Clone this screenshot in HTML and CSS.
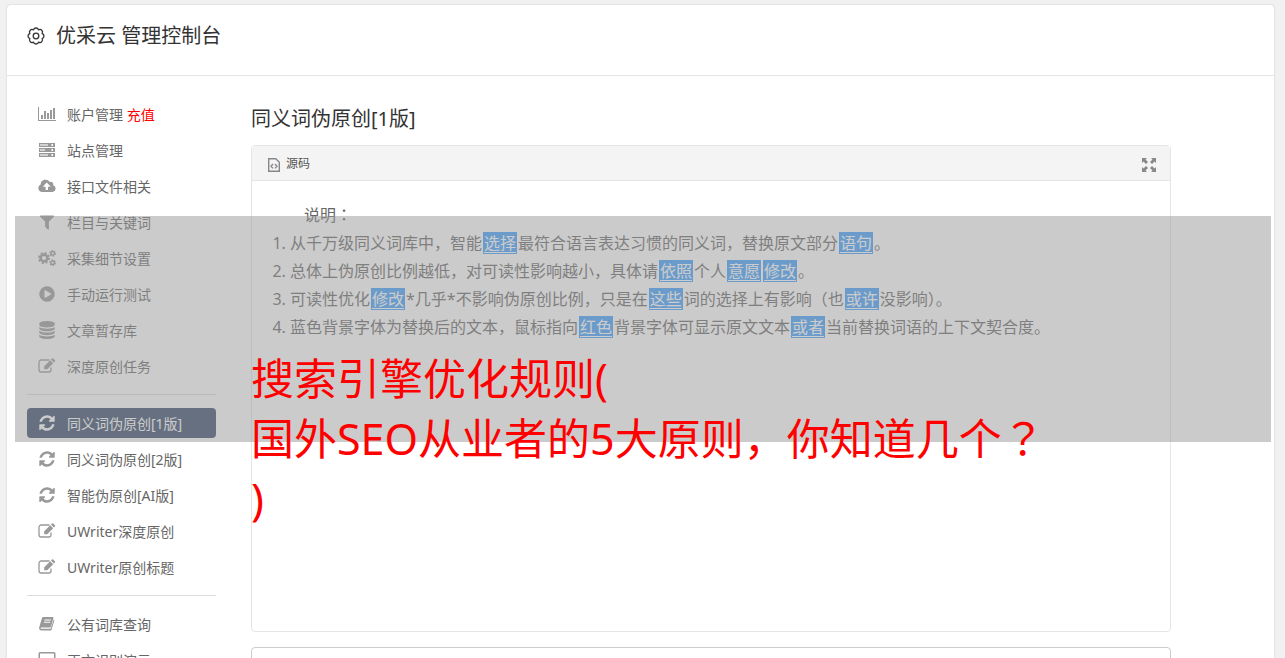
FILE: index.html
```html
<!DOCTYPE html>
<html lang="zh-CN">
<head>
    <meta charset="UTF-8">
    <title>优采云 管理控制台</title>
    <link rel="stylesheet" href="styles.css">
</head>
<body>
    <!-- 图标 -->
    <svg class="sprite" aria-hidden="true">
        <symbol id="i-gear" viewBox="0 0 20 20">
            <path fill="none" stroke="currentColor" stroke-width="1.3" stroke-linejoin="round" d="M16.1 12.5A2.6 2.6 0 0 1 12.5 16.1A2.6 2.6 0 0 1 7.5 16.1A2.6 2.6 0 0 1 3.9 12.5A2.6 2.6 0 0 1 3.9 7.5A2.6 2.6 0 0 1 7.5 3.9A2.6 2.6 0 0 1 12.5 3.9A2.6 2.6 0 0 1 16.1 7.5A2.6 2.6 0 0 1 16.1 12.5z"/>
            <circle cx="10" cy="10" r="2.8" fill="none" stroke="currentColor" stroke-width="1.3"/>
        </symbol>
        <symbol id="i-chart" viewBox="0 0 18 18">
            <path d="M0 2h1v13h17v1H0zM3 10h2v4H3zM6 6h2v8H6zM9 8h2v6H9zM12 5h2v9h-2zM15 3h2v11h-2z"/>
        </symbol>
        <symbol id="i-server" viewBox="0 0 18 18">
            <path fill-rule="evenodd" d="M1 2h16v4H1zM2 3v2h8V3zM13 3v2h2V3zM1 7h16v4H1zM2 8v2h5V8zM13 8v2h2V8zM1 12h16v4H1zM2 13v2h8v-2zM13 13v2h2v-2z"/>
            <path opacity=".45" d="M2 3h12v2H2zM2 8h12v2H2zM2 13h12v2H2z"/>
        </symbol>
        <symbol id="i-cloud" viewBox="0 0 18 18">
            <path fill-rule="evenodd" d="M4.5 15A4 4 0 0 1 2.6 7.4A5 5 0 0 1 11.8 5A2.6 2.6 0 0 1 15.2 8.2A3.5 3.5 0 0 1 14.5 15zM8.7 5.6L5.2 9.2V9.8H7.6V13H10V9.8H12.4V9.2z"/>
        </symbol>
        <symbol id="i-filter" viewBox="0 0 1792 1792">
            <path d="M1595 295q17 41-14 70l-493 493v742q0 42-39 59-13 5-25 5-27 0-45-19l-256-256q-19-19-19-45v-486l-493-493q-31-29-14-70 17-39 59-39h1280q42 0 59 39z"/>
        </symbol>
        <symbol id="i-cogs" viewBox="0 0 18 18">
            <g fill="none" stroke="currentColor">
                <circle cx="6" cy="9" r="3.4" stroke-width="2.6"/>
                <circle cx="6" cy="9" r="5.1" stroke-width="1.8" stroke-dasharray="2 2"/>
                <circle cx="14.6" cy="4.3" r="1.8" stroke-width="1.5"/>
                <circle cx="14.6" cy="4.3" r="2.8" stroke-width="1.1" stroke-dasharray="1.5 1.43"/>
                <circle cx="14.6" cy="13.7" r="1.8" stroke-width="1.5"/>
                <circle cx="14.6" cy="13.7" r="2.8" stroke-width="1.1" stroke-dasharray="1.5 1.43"/>
            </g>
        </symbol>
        <symbol id="i-play" viewBox="0 0 1792 1792">
            <path d="M896 128q209 0 385.5 103t279.5 279.5 103 385.5-103 385.5-279.5 279.5-385.5 103-385.5-103-279.5-279.5-103-385.5 103-385.5 279.5-279.5 385.5-103zm384 823q32-18 32-55t-32-55l-544-320q-31-19-64-1-32 19-32 56v640q0 37 32 56 16 8 32 8 17 0 32-9z"/>
        </symbol>
        <symbol id="i-database" viewBox="0 0 1792 1792">
            <path d="M896 768q237 0 443-43t325-127v170q0 69-103 128t-280 93.5-385 34.5-385-34.5-280-93.5-103-128v-170q119 84 325 127t443 43zm0 768q237 0 443-43t325-127v170q0 69-103 128t-280 93.5-385 34.5-385-34.5-280-93.5-103-128v-170q119 84 325 127t443 43zm0-384q237 0 443-43t325-127v170q0 69-103 128t-280 93.5-385 34.5-385-34.5-280-93.5-103-128v-170q119 84 325 127t443 43zm0-1152q208 0 385 34.5t280 93.5 103 128v128q0 69-103 128t-280 93.5-385 34.5-385-34.5-280-93.5-103-128v-128q0-69 103-128t280-93.5 385-34.5z"/>
        </symbol>
        <symbol id="i-edit" viewBox="0 0 18 18">
            <path fill="none" stroke="currentColor" stroke-width="1.3" d="M11.5 3H3.2A2.2 2.2 0 0 0 1 5.2V12.8A2.2 2.2 0 0 0 3.2 15H10.8A2.2 2.2 0 0 0 13 12.8V10.5"/>
            <path d="M6.2 12.2V9.2L12.2 3.2L15.2 6.2L9.2 12.2zM13 2.5L14 1.5Q14.6 1 15.2 1.5L16.9 3.2Q17.4 3.8 16.9 4.4L15.9 5.4z"/>
        </symbol>
        <symbol id="i-refresh" viewBox="0 0 1792 1792">
            <path d="M1639 1056q0 5-1 7-64 268-268 434.5t-478 166.5q-146 0-282.5-55t-243.5-157l-129 129q-19 19-45 19t-45-19-19-45v-448q0-26 19-45t45-19h448q26 0 45 19t19 45-19 45l-137 137q71 66 161 102t187 36q134 0 250-65t186-179q11-17 53-117 8-23 30-23h192q13 0 22.5 9.5t9.5 22.5zm25-800v448q0 26-19 45t-45 19h-448q-26 0-45-19t-19-45 19-45l138-138q-148-137-349-137-134 0-250 65t-186 179q-11 17-53 117-8 23-30 23h-199q-13 0-22.5-9.5t-9.5-22.5v-7q65-268 270-434.5t480-166.5q146 0 284 55.5t245 156.5l130-129q19-19 45-19t45 19 19 45z"/>
        </symbol>
        <symbol id="i-book" viewBox="0 0 18 18">
            <path fill-rule="evenodd" d="M5.2 2H14.4Q15.8 2 15.4 3.4L13 11.4Q12.7 12.4 11.6 12.4H3.4Q2.4 12.4 2.6 13.2Q2.8 13.8 3.6 13.8H12.6L15.8 4.4Q16.6 4.8 16.3 5.8L13.6 14.4Q13.2 15.6 12 15.6H3.4Q1.4 15.6 1.1 13.6Q1 12.8 1.3 12L3.8 3.4Q4.2 2 5.2 2zM6.6 4.6L6.3 5.6H12.7L13 4.6zM6 6.8L5.7 7.8H12L12.3 6.8z"/>
        </symbol>
        <symbol id="i-laptop" viewBox="0 0 18 18">
            <path fill-rule="evenodd" d="M2 1H16Q17.5 1 17.5 2.5V12H.5V2.5Q.5 1 2 1zM2 2.4V10.6H16V2.4zM0 13H18V15H0z"/>
        </symbol>
        <symbol id="i-source" viewBox="0 0 12 14">
            <path fill="none" stroke="currentColor" stroke-width="1.4" d="M.7.7H7.8L11.3 4.2V13.3H.7zM5 6L3 8.2L5 10.4M7 6L9 8.2L7 10.4"/>
        </symbol>
        <symbol id="i-full" viewBox="0 0 14 14">
            <path d="M0 0H5L3.5 1.5L6 4L4 6L1.5 3.5L0 5zM14 0V5L12.5 3.5L10 6L8 4L10.5 1.5L9 0zM0 14V9L1.5 10.5L4 8L6 10L3.5 12.5L5 14zM14 14H9L10.5 12.5L8 10L10 8L12.5 10.5L14 9z"/>
        </symbol>
    </svg>

    <div class="container">
        <header class="header">
            <svg class="logo"><use href="#i-gear"/></svg>
            <h1>优采云 管理控制台</h1>
        </header>

        <div class="content">
            <nav class="sidebar">
                <div class="item"><svg><use href="#i-chart"/></svg><a href="#">账户管理</a>&nbsp;<a href="#" class="pay">充值</a></div>
                <a class="item" href="#"><svg><use href="#i-server"/></svg>站点管理</a>
                <a class="item" href="#"><svg><use href="#i-cloud"/></svg>接口文件相关</a>
                <a class="item" href="#"><svg><use href="#i-filter"/></svg>栏目与关键词</a>
                <a class="item" href="#"><svg><use href="#i-cogs"/></svg>采集细节设置</a>
                <a class="item" href="#"><svg><use href="#i-play"/></svg>手动运行测试</a>
                <a class="item" href="#"><svg><use href="#i-database"/></svg>文章暂存库</a>
                <a class="item" href="#"><svg><use href="#i-edit"/></svg>深度原创任务</a>
                <hr>
                <a class="item active" href="#"><svg><use href="#i-refresh"/></svg>同义词伪原创[1版]</a>
                <a class="item" href="#"><svg><use href="#i-refresh"/></svg>同义词伪原创[2版]</a>
                <a class="item" href="#"><svg><use href="#i-refresh"/></svg>智能伪原创[AI版]</a>
                <a class="item" href="#"><svg><use href="#i-edit"/></svg>UWriter深度原创</a>
                <a class="item" href="#"><svg><use href="#i-edit"/></svg>UWriter原创标题</a>
                <hr>
                <a class="item" href="#"><svg><use href="#i-book"/></svg>公有词库查询</a>
                <a class="item" href="#"><svg><use href="#i-laptop"/></svg>正文识别演示</a>
            </nav>

            <main class="main">
                <h2>同义词伪原创[1版]</h2>
                <section class="editor">
                    <div class="toolbar">
                        <button type="button"><svg class="source"><use href="#i-source"/></svg>源码</button>
                        <button type="button" aria-label="全屏"><svg class="full"><use href="#i-full"/></svg></button>
                    </div>
                    <div class="text">
                        <p>说明<span class="mark" lang="zh-TW">：</span></p>
                        <ol>
                            <li>从千万级同义词库中，智能<u>选择</u>最符合语言表达习惯的同义词，替换原文部分<u>语句</u>。</li>
                            <li>总体上伪原创比例越低，对可读性影响越小，具体请<u>依照</u>个人<u>意愿</u><u>修改</u>。</li>
                            <li>可读性优化<u>修改</u>*几乎*不影响伪原创比例，只是在<u>这些</u>词的选择上有影响（也<u>或许</u>没影响）。</li>
                            <li>蓝色背景字体为替换后的文本，鼠标指向<u>红色</u>背景字体可显示原文文本<u>或者</u>当前替换词语的上下文契合度。</li>
                        </ol>
                    </div>
                </section>
                <textarea class="result" aria-label="结果"></textarea>
            </main>
        </div>
    </div>

    <!-- 标题遮罩 -->
    <div class="mask"></div>
    <div class="headline">搜索引擎优化规则(<br>国外SEO从业者的5大原则，你知道几个<span class="mark" lang="zh-TW">？</span><br>)</div>
</body>
</html>
```
FILE: styles.css
```css
* {
    box-sizing: border-box;
}

body {
    position: relative;
    margin: 0;
    padding: 4px 10px 0 6px;
    background: #f1f1f1;
    color: #666;
    font-family: "Noto Sans", "Noto Sans CJK SC", sans-serif;
    font-size: 14px;
}

a {
    color: inherit;
    text-decoration: none;
}

h1, h2 {
    margin: 0;
    color: #333;
    font-size: 20px;
    font-weight: 400;
    line-height: 30px;
}

.sprite {
    display: none;
}

svg {
    fill: currentColor;
}

.container {
    background: #fff;
    border: 1px solid #e5e5e5;
    border-radius: 5px;
    box-shadow: 0 0 1px #ddd;
}

.header {
    display: flex;
    align-items: center;
    gap: 10px;
    height: 71px;
    padding: 0 19px 8px;
    border-bottom: 1px solid #e5e5e5;
}

.logo {
    width: 20px;
    height: 20px;
    color: #333;
}

.content {
    display: flex;
    gap: 35px;
    padding: 23px 20px;
}

/* 左侧菜单 */
.sidebar {
    display: flex;
    flex: none;
    flex-direction: column;
    gap: 6px;
    width: 189px;
}

.item {
    display: flex;
    align-items: center;
    height: 30px;
    padding-bottom: 1px;
    padding-left: 11px;
    border-radius: 4px;
}

.item svg {
    width: 18px;
    height: 18px;
    margin-right: 11px;
    color: #999;
}

.item.active {
    background: #354969;
    color: #fff;
}

.item.active svg {
    color: #fff;
}

.pay {
    color: #f00;
}

.sidebar hr {
    width: 100%;
    height: 1px;
    margin: 7px 0;
    border: 0;
    background: #ddd;
}

/* 编辑器 */
.main {
    flex: 1;
    max-width: 920px;
    padding-top: 5px;
}

.editor {
    margin-top: 11px;
    border: 1px solid #e5e5e5;
    border-radius: 4px;
}

.toolbar {
    display: flex;
    align-items: center;
    justify-content: space-between;
    height: 35px;
    padding: 0 14px 0 16px;
    background: #f4f4f4;
    border-bottom: 1px solid #e5e5e5;
}

.toolbar button {
    display: flex;
    align-items: center;
    gap: 6px;
    padding: 0;
    border: 0;
    background: none;
    color: #555;
    font-family: inherit;
    font-size: 12px;
    cursor: pointer;
}

.toolbar svg {
    margin-top: 3px;
    color: #888;
}

.source {
    width: 12px;
    height: 14px;
}

.full {
    width: 14px;
    height: 14px;
}

.text {
    min-height: 450px;
    padding: 20px;
    font-size: 16px;
    line-height: 28px;
}

.text p {
    margin: 0;
    text-indent: 2em;
}

.text ol {
    margin: 0;
    padding-left: 18px;
}

.text u {
    margin: 0 1px;
    padding: 0 1px;
    background: #3f9fff;
    color: #fff;
    text-underline-offset: 3px;
}

/* 居中的标点 */
.mark {
    font-family: "Noto Sans CJK TC", sans-serif;
    line-height: 1;
}

.result {
    display: block;
    width: 100%;
    height: 120px;
    margin-top: 15px;
    border: 1px solid #ccc;
    border-radius: 4px;
}

/* 遮罩和红色标题 */
.mask {
    position: absolute;
    top: 216px;
    right: 14px;
    left: 15px;
    height: 226px;
    background: rgba(151, 151, 151, 0.5);
}

.headline {
    position: absolute;
    top: 349px;
    left: 251px;
    color: #f00;
    font-size: 43px;
    line-height: 60px;
}
```
